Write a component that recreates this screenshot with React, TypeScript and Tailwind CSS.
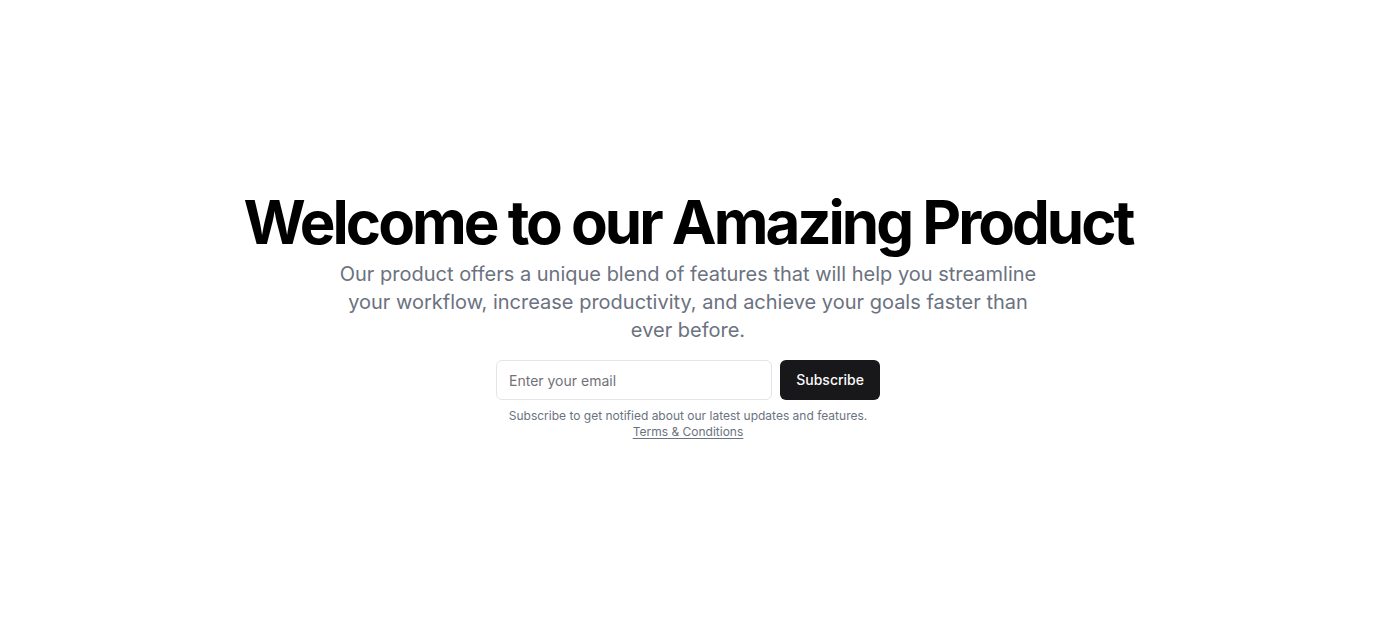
import React from "react";

export default function App() {
  return (
    <section
      className="w-full h-screen flex items-center justify-center bg-white"
      style={{ fontFamily: "Inter, 'Noto Sans', sans-serif" }}
    >
      <div className="px-6 w-full">
        <div className="flex flex-col items-center space-y-4 text-center">
          <div className="space-y-2">
            <h1 className="text-6xl font-bold tracking-tighter text-black leading-none">
              Welcome to our Amazing Product
            </h1>
            <p className="mx-auto max-w-[700px] text-xl leading-7 text-[#6b7280]">
              Our product offers a unique blend of features that will help you streamline your
              workflow, increase productivity, and achieve your goals faster than ever before.
            </p>
          </div>
          <div className="w-full max-w-sm space-y-2">
            <form className="flex space-x-2" onSubmit={(e) => e.preventDefault()}>
              <input
                type="email"
                placeholder="Enter your email"
                className="flex-1 h-10 min-w-0 rounded-md border border-[#e4e4e7] bg-white px-3 py-2 text-sm placeholder:text-[#71717a] outline-none"
              />
              <button
                type="submit"
                className="h-10 rounded-md bg-[#18181b] px-4 text-sm font-medium text-[#fafafa]"
              >
                Subscribe
              </button>
            </form>
            <p className="text-xs text-[#6b7280]">
              Subscribe to get notified about our latest updates and features.
              <br />
              <a href="#" className="underline underline-offset-2">
                Terms &amp; Conditions
              </a>
            </p>
          </div>
        </div>
      </div>
    </section>
  );
}
